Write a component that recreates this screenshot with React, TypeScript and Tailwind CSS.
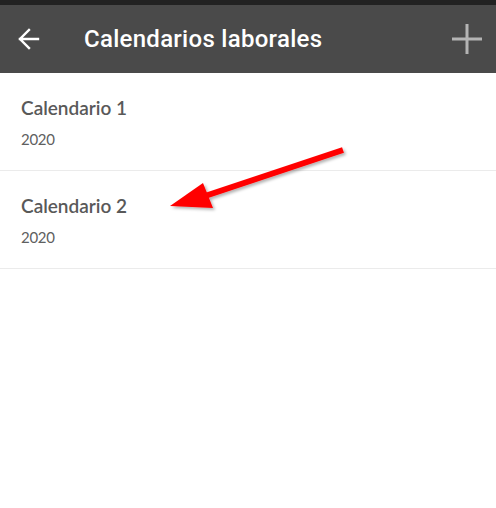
const calendars = [
  { name: "Calendario 1", year: "2020" },
  { name: "Calendario 2", year: "2020" },
];

export default function App() {
  return (
    <div className="w-[496px] h-[508px] bg-white relative overflow-hidden">
      <div className="h-[5px] bg-[#222222]" />
      <header className="h-[68px] bg-[#4a4a4a] flex items-center">
        <div className="w-[84px] pl-[18px] flex items-center">
          <svg width="22" height="22" viewBox="0 0 22 22">
            <path
              d="M2 11H20M11 2L2 11L11 20"
              stroke="#ffffff"
              strokeWidth="2.4"
              fill="none"
              strokeLinecap="square"
            />
          </svg>
        </div>
        <h1
          className="flex-1 text-white text-[24px] font-medium tracking-[0.28px]"
          style={{ fontFamily: "Roboto, sans-serif" }}
        >
          Calendarios laborales
        </h1>
        <div className="pr-[14px] flex items-center">
          <svg width="30" height="30" viewBox="0 0 30 30">
            <path d="M15 0V30M0 15H30" stroke="#b4b4b4" strokeWidth="3" />
          </svg>
        </div>
      </header>
      <ul style={{ fontFamily: "Lato, sans-serif" }}>
        {calendars.map((c) => (
          <li key={c.name} className="h-[98px] border-b border-[#ebebeb] pl-[21px] pt-[22px]">
            <p className="text-[19px] font-semibold text-[#595959] leading-[26px]">{c.name}</p>
            <p className="text-[15px] text-[#606060] leading-[18px] mt-[9px] tracking-[-0.3px]">{c.year}</p>
          </li>
        ))}
      </ul>
      <svg
        className="absolute left-0 top-0"
        width="496"
        height="508"
        viewBox="0 0 496 508"
      >
        <defs>
          <filter id="sh" x="-10%" y="-10%" width="130%" height="130%">
            <feDropShadow dx="2" dy="2" stdDeviation="1.5" floodColor="#000" floodOpacity="0.3" />
          </filter>
        </defs>
        <g filter="url(#sh)">
          <line x1="343" y1="150" x2="205" y2="196" stroke="#ff0000" strokeWidth="6" />
          <polygon points="170,206 203,183 213,208" fill="#ff0000" />
        </g>
      </svg>
    </div>
  );
}
